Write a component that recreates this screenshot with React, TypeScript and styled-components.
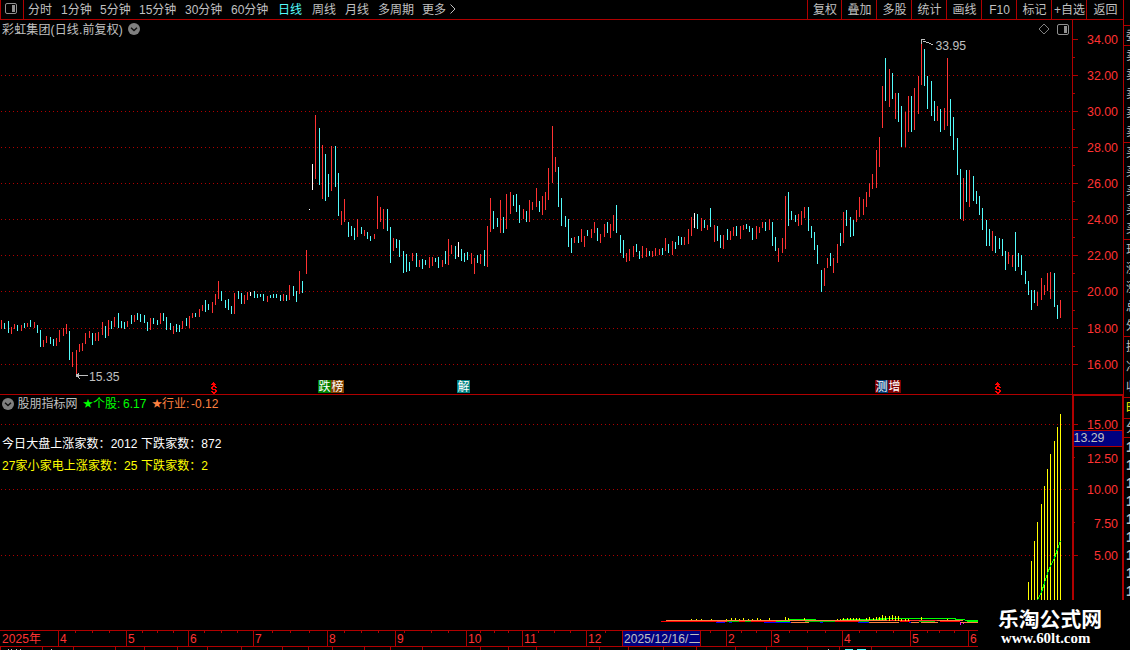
import React from "react";
import styled, { createGlobalStyle } from "styled-components";

const RED = "#b00000";
const LABEL_RED = "#ff3232";
const UP = "#ff3232";
const DOWN = "#54fcfc";
const GRAY = "#c0c0c0";
const FONT = '"Liberation Sans", "Noto Sans CJK SC", sans-serif';

const GlobalStyle = createGlobalStyle`
  * { box-sizing: border-box; }
  body { margin: 0; background: #000; overflow: hidden; }
`;

const Shell = styled.div`
  position: relative;
  display: grid;
  grid-template-columns: 1124px 6px;
  width: 1130px;
  height: 650px;
  overflow: hidden;
  background: #000;
  color: ${GRAY};
  font: 12px/18px ${FONT};
  white-space: pre;
`;

const Main = styled.div`
  display: flex;
  flex-direction: column;
  min-width: 0;
`;

const Toolbar = styled.div`
  display: flex;
  height: 20px;
  border-bottom: 1px solid ${RED};
  border-left: 1px solid ${RED};
  border-right: 1px solid ${RED};
`;

const ToggleCell = styled.div`
  width: 23px;
  padding: 3px 0 0 4px;
  border-right: 1px solid ${RED};
  line-height: 0;
`;

const Periods = styled.div`
  display: flex;
  flex: 1;
  padding-left: 4px;
`;

const Period = styled.div<{ $w: number; $active?: boolean }>`
  width: ${(p) => p.$w}px;
  line-height: 20px;
  color: ${(p) => (p.$active ? DOWN : GRAY)};
`;

const ToolButton = styled.div<{ $w: number }>`
  width: ${(p) => p.$w}px;
  padding-left: 1px;
  border-left: 1px solid ${RED};
  text-align: center;
  line-height: 20px;
`;

const Pane = styled.div<{ $h: number }>`
  display: grid;
  grid-template-columns: 1072px 52px;
  height: ${(p) => p.$h}px;
`;

const PlotColumn = styled.div`
  position: relative;
  display: flex;
  flex-direction: column;
  svg { display: block; }
`;

const PaneHeader = styled.div<{ $h: number; $pad: number }>`
  display: flex;
  align-items: center;
  flex: none;
  height: ${(p) => p.$h}px;
  padding: 0 3px 0 ${(p) => p.$pad}px;
`;

const Title = styled.span`
  margin-right: 5px;
  padding-top: 1px;
  letter-spacing: 0.14px;
`;

const HeaderIcons = styled.div`
  display: flex;
  gap: 7px;
  align-items: center;
  margin-left: auto;
`;

const Divider = styled.div`
  width: 1072px;
  height: 1px;
  background: ${RED};
`;

const Legend = styled.span<{ $color: string; $w: number }>`
  width: ${(p) => p.$w}px;
  color: ${(p) => p.$color};
`;

const Star = styled(Legend)`
  font-size: 10px;
`;

const Stats = styled.div`
  position: absolute;
  left: 2px;
  top: 38px;
  line-height: 22px;
  letter-spacing: 0.07px;
`;

const StatLine = styled.div<{ $color: string }>`
  color: ${(p) => p.$color};
`;

const TimeAxis = styled.div`
  display: flex;
  width: 978px;
  height: 17px;
  overflow: hidden;
  border-top: 1px solid ${RED};
  border-bottom: 1px solid ${RED};
  color: ${LABEL_RED};
`;

const MonthCell = styled.div<{ $w: number; $first?: boolean; $cursor?: boolean }>`
  position: relative;
  flex: none;
  width: ${(p) => p.$w}px;
  padding-left: ${(p) => (p.$first ? 2 : 1)}px;
  line-height: 16px;
  letter-spacing: 0.1px;
  border-left: ${(p) => (p.$first ? "0" : `1px solid ${RED}`)};
  background: ${(p) => (p.$cursor ? "#000080" : "transparent")};
  color: ${(p) => (p.$cursor ? GRAY : LABEL_RED)};
`;

const Tick = styled.i<{ $x: number }>`
  position: absolute;
  top: 0;
  left: ${(p) => p.$x}px;
  width: 1px;
  height: 2px;
  background: ${RED};
`;

const SidePanel = styled.div`
  overflow: hidden;
`;

const SideGroup = styled.div<{ $h: number; $line?: boolean }>`
  display: flex;
  flex-direction: column;
  justify-content: space-around;
  height: ${(p) => p.$h}px;
  padding-left: 2px;
  border-bottom: ${(p) => (p.$line === false ? "0" : `1px solid ${RED}`)};
`;

const SideText = styled.div<{ $color?: string; $large?: boolean }>`
  width: 40px;
  line-height: 18px;
  color: ${(p) => p.$color ?? GRAY};
  font-size: ${(p) => (p.$large ? 14 : 12)}px;
  font-weight: ${(p) => (p.$large ? 700 : 400)};
`;

const Brand = styled.div`
  position: absolute;
  right: 0;
  bottom: 0;
  width: 152px;
  height: 50px;
  padding: 7px 0 0 20px;
  background: #000;
  color: #fff;
`;

const BrandName = styled.div`
  font: 700 20.8px/23px "Noto Sans CJK SC", sans-serif;
`;

const BrandUrl = styled.div`
  padding-left: 3px;
  font: 700 14.9px/17px "Liberation Serif", serif;
`;

type Bar = [number, number, number, string];

// x, top, bottom, direction (R rising, C falling, W unchanged)
const SERIES = `1 320 329 R;4 323 329 C;8 321 333 C;11 327 334 R;14 324 329 R;17 325 331 C;21 325 331 R;24 323 328 C;27 323 327 R;30 320 327 C;34 322 328 R;37 325 333 C;40 330 347 C;43 340 347 R;46 336 343 R;50 337 344 C;53 339 346 C;56 338 346 R;59 330 342 R;63 328 336 R;66 324 334 R;69 331 360 C;72 352 367 R;76 350 374 R;79 344 352 R;82 343 351 R;85 333 344 R;89 331 338 R;92 333 345 C;95 333 341 R;98 332 341 R;102 322 335 R;105 326 338 C;108 320 336 R;111 321 329 C;114 317 327 R;118 313 328 C;121 321 328 C;124 322 329 C;127 321 327 R;131 315 324 C;134 315 322 R;137 313 320 C;140 314 322 C;144 315 323 C;147 322 331 C;150 318 330 R;153 318 324 C;157 320 325 C;160 313 324 R;163 313 321 C;166 317 330 C;170 323 330 C;173 326 334 R;176 324 332 C;179 325 332 C;182 321 329 R;186 318 326 C;189 316 328 R;192 313 318 R;195 313 317 C;199 309 317 R;202 305 311 R;205 300 312 C;208 304 310 C;212 302 313 R;215 294 305 R;218 281 299 R;221 291 301 C;225 300 308 C;228 299 310 C;231 306 314 C;234 293 314 R;238 291 299 C;241 293 304 C;244 295 304 R;247 292 300 R;250 292 296 W;254 291 298 C;257 294 298 C;260 294 297 C;263 294 301 C;267 296 302 R;270 295 298 C;273 294 298 C;276 294 298 C;280 295 301 C;283 294 301 R;286 295 301 C;289 285 300 R;293 286 296 C;296 291 302 C;299 271 294 R;302 281 293 C;306 250 274 R;309 209 210 W;312 164 190 W;315 115 179 R;319 128 185 C;322 145 199 R;325 154 201 C;328 174 197 C;331 146 191 R;335 146 187 C;338 173 216 C;341 211 225 R;344 199 222 R;348 222 237 C;351 226 236 C;354 228 240 C;357 219 237 R;361 227 234 C;364 230 236 R;367 232 239 C;370 236 241 C;374 234 239 R;377 196 229 R;380 207 222 R;383 209 229 R;387 209 231 C;390 227 263 C;393 238 251 R;396 239 248 C;399 240 257 C;403 251 273 C;406 254 272 C;409 262 271 C;412 253 261 R;416 253 267 C;419 260 267 R;422 259 269 C;425 260 265 C;429 257 268 R;432 257 266 R;435 258 262 C;438 257 268 C;442 260 267 R;445 251 264 C;448 239 265 R;451 245 254 R;455 246 259 C;458 242 257 W;461 249 261 C;464 253 262 C;467 252 260 C;471 253 264 R;474 258 274 R;477 255 263 C;480 254 264 R;484 250 266 C;487 226 267 R;490 198 232 R;493 211 229 C;497 218 227 C;500 200 233 R;503 217 233 C;506 194 229 R;510 192 214 R;513 195 206 C;516 194 212 C;519 205 223 C;523 209 219 R;526 211 222 C;529 200 222 R;532 202 210 R;536 188 207 R;539 201 212 C;542 196 215 R;545 192 210 R;548 168 200 R;552 126 183 R;555 157 172 R;558 167 207 C;561 198 226 C;565 216 227 C;568 219 247 C;571 238 253 C;574 237 243 R;578 236 243 C;581 229 242 R;584 236 247 R;587 230 236 C;591 229 238 R;594 222 233 R;597 228 241 C;600 234 243 R;604 224 237 R;607 222 233 C;610 224 238 R;613 215 231 R;616 205 233 C;620 235 253 C;623 240 258 C;626 253 262 R;629 249 261 R;633 246 257 R;636 244 252 C;639 251 259 C;642 246 258 R;646 248 257 R;649 251 256 C;652 251 257 R;655 248 256 R;659 249 255 R;662 248 255 C;665 238 251 R;668 244 253 C;672 241 255 R;675 242 249 C;678 236 245 C;681 237 245 C;684 237 245 R;688 229 244 R;691 217 236 R;694 213 228 W;697 214 229 C;701 218 231 R;704 220 228 C;707 225 230 R;710 208 227 C;714 225 242 R;717 226 241 C;720 235 248 C;723 235 249 R;727 229 240 C;730 231 240 R;733 227 236 R;736 226 236 C;740 226 239 R;743 225 230 R;746 224 229 C;749 226 232 C;752 228 240 C;756 226 239 R;759 227 233 R;762 222 228 R;765 222 231 C;769 219 230 R;772 222 246 C;775 237 251 C;778 248 262 R;782 238 253 R;785 196 249 R;788 192 226 C;791 211 220 C;795 215 222 C;798 214 226 R;801 211 225 R;804 207 218 R;808 207 231 C;811 226 238 C;814 232 250 C;817 245 264 C;821 270 292 C;824 268 286 R;827 258 268 R;830 253 266 C;833 258 273 R;837 244 263 R;840 233 246 C;843 212 243 R;846 210 226 C;850 217 237 C;853 220 236 C;856 210 222 R;859 197 217 R;863 199 215 R;866 192 207 R;869 183 197 R;872 174 189 R;876 150 188 R;879 137 167 R;882 86 128 R;885 58 101 C;889 69 107 R;892 73 99 C;895 93 119 R;898 93 122 C;901 106 147 C;905 112 147 R;908 96 132 R;911 96 132 C;914 88 130 R;918 76 114 R;921 43 85 R;924 49 86 C;927 76 109 C;931 81 116 C;934 101 121 C;937 106 121 R;940 109 132 C;944 108 130 R;947 58 126 R;950 99 136 C;953 117 150 C;957 138 175 C;960 169 219 C;963 178 221 R;966 170 202 C;969 170 207 R;973 176 201 C;976 191 204 C;979 196 215 C;982 208 230 C;986 220 246 C;989 229 246 C;992 231 251 R;995 236 253 C;999 238 249 C;1002 239 256 C;1005 251 270 C;1008 252 264 R;1012 255 267 R;1015 232 271 C;1018 253 267 C;1021 255 275 C;1025 271 284 C;1028 281 295 C;1031 290 310 C;1034 290 303 C;1037 292 306 R;1041 278 300 R;1044 285 295 R;1047 273 291 R;1050 272 299 R;1054 273 307 C;1057 305 319 C;1060 300 318 R`;

const COLORS: Record<string, string> = { R: UP, C: DOWN, W: "#ffffff" };

const bars: Bar[] = SERIES.split(";").map((row) => {
  const [x, top, bottom, dir] = row.split(" ");
  return [Number(x), Number(top), Number(bottom), COLORS[dir]];
});

const priceLevels: [number, string][] = [
  [39, "34.00"], [75, "32.00"], [111, "30.00"], [147, "28.00"], [183, "26.00"],
  [219, "24.00"], [255, "22.00"], [291, "20.00"], [328, "18.00"], [364, "16.00"],
];
const priceMinor = [57, 93, 129, 165, 201, 237, 273, 310, 346];

const breadthLevels: [number, string][] = [
  [424, "15.00"], [458, "12.50"], [489, "10.00"], [523, "7.50"], [555, "5.00"],
];

const breadthBars: [number, number][] = [
  [1028, 582], [1031, 561], [1034, 541], [1037, 522], [1041, 504], [1044, 486],
  [1047, 469], [1050, 454], [1054, 441], [1057, 427], [1060, 414],
];

const spikes: [number, number, number][] = [
  [691, 619, 1], [696, 619, 1], [701, 619, 1], [711, 619, 1], [726, 619, 1], [731, 618, 2],
  [735, 618, 2], [739, 619, 1], [743, 618, 2], [748, 619, 1], [752, 619, 1], [757, 618, 2],
  [760, 619, 1], [769, 618, 2], [785, 617, 3], [788, 618, 2], [804, 618, 2], [837, 619, 1],
  [840, 619, 1], [843, 618, 2], [847, 618, 2], [850, 618, 2], [853, 618, 2], [856, 618, 2],
  [859, 618, 2], [866, 618, 2], [869, 617, 3], [873, 618, 2], [876, 617, 3], [879, 617, 3],
  [882, 615, 5], [885, 616, 4], [889, 616, 5], [892, 615, 5], [895, 616, 5], [898, 616, 5],
  [901, 619, 2], [905, 619, 2], [908, 619, 2], [921, 617, 3], [947, 619, 1],
];

// Thin horizontal runs of the flat indicator lines: x, y, width, colour
const runs: [number, number, number, string][] = [
  [661, 621, 56, "#ff0000"], [666, 620, 227, "#ff8040"], [717, 621, 18, "#ff3232"],
  [716, 622, 9, "#0000ff"], [729, 622, 3, "#0000ff"], [764, 622, 28, "#0000ff"],
  [735, 621, 26, "#ff0000"], [761, 621, 20, "#ff0000"], [727, 621, 12, "#00c000"],
  [745, 621, 6, "#00c000"], [776, 621, 14, "#00ff00"], [788, 619, 28, "#00ff00"],
  [791, 622, 18, "#ff8040"], [805, 621, 30, "#00c000"], [820, 622, 3, "#0000ff"],
  [815, 620, 12, "#ff8040"], [835, 621, 24, "#ff0000"], [842, 619, 45, "#00ff00"],
  [858, 622, 12, "#0000ff"], [859, 621, 10, "#00c000"], [869, 622, 30, "#ff8040"],
  [878, 618, 78, "#00ff00"], [887, 620, 50, "#ff3232"], [900, 621, 10, "#ff0000"],
  [909, 622, 5, "#0000ff"], [911, 622, 8, "#ff8040"], [921, 622, 17, "#ff8040"],
  [919, 621, 16, "#00c000"], [937, 620, 26, "#ff8040"], [940, 621, 20, "#ff0000"],
  [955, 619, 10, "#00ff00"], [965, 620, 13, "#00ff00"], [967, 621, 11, "#00ff00"],
  [960, 622, 18, "#ff8040"], [960, 622, 1, "#ff00ff"], [960, 623, 1, "#ff00ff"],
  [960, 624, 1, "#ff00ff"], [963, 623, 1, "#ff00ff"],
];

const periods: [string, number][] = [
  ["分时", 33], ["1分钟", 39], ["5分钟", 39], ["15分钟", 46], ["30分钟", 46], ["60分钟", 47],
  ["日线", 34], ["周线", 33], ["月线", 33], ["多周期", 44], ["更多", 28],
];

const tools: [string, number][] = [
  ["复权", 34], ["叠加", 35], ["多股", 35], ["统计", 35], ["画线", 35], ["F10", 35],
  ["标记", 35], ["+自选", 35], ["返回", 37],
];

const months: { x: number; label: string; ticks: number[]; cursor?: boolean }[] = [
  { x: 0, label: "2025年", ticks: [] },
  { x: 58, label: "4", ticks: [75, 92, 109] },
  { x: 126, label: "5", ticks: [142, 157, 173] },
  { x: 188, label: "6", ticks: [204, 221, 237] },
  { x: 253, label: "7", ticks: [272, 290, 309] },
  { x: 327, label: "8", ticks: [344, 361, 378] },
  { x: 395, label: "9", ticks: [404, 431, 448] },
  { x: 466, label: "10", ticks: [480, 494, 508] },
  { x: 522, label: "11", ticks: [538, 554, 570] },
  { x: 586, label: "12", ticks: [605] },
  { x: 622, label: "2025/12/16/二", ticks: [], cursor: true },
  { x: 700, label: "", ticks: [710] },
  { x: 726, label: "2", ticks: [741, 756] },
  { x: 771, label: "3", ticks: [789, 807, 825] },
  { x: 842, label: "4", ticks: [859, 876, 893] },
  { x: 910, label: "5", ticks: [927, 939, 954] },
  { x: 968, label: "6", ticks: [] },
];

const footerTicks = [
  0, 42, 73, 115, 144, 177, 207, 241, 282, 308, 332, 364, 390, 422, 480, 508, 536, 599, 628,
  663, 696, 735, 766, 807, 839, 871,
];

const PanelIcon = () => (
  <svg width="12" height="11" viewBox="0 0 12 11">
    <rect x="0.5" y="0.5" width="11" height="10" rx="1.5" fill="none" stroke="#909090" />
    <rect x="7" y="2" width="3" height="7" fill="#909090" />
  </svg>
);

const ChevronBadge = () => (
  <svg width="12" height="12" viewBox="0 0 12 12">
    <circle cx="6" cy="6" r="6" fill="#808080" />
    <path d="M3 4.8 L6 7.6 L9 4.8" fill="none" stroke="#101010" strokeWidth="1.4" />
  </svg>
);

const GridRow = ({ y }: { y: number }) => (
  <line x1="1" x2="1071" y1={y + 0.5} y2={y + 0.5} stroke={RED} strokeDasharray="1 3" />
);

const Dividend = ({ x }: { x: number }) => (
  <path
    fill="#ff0000"
    shapeRendering="crispEdges"
    d={`M${x + 2} 382h1v1h1v1h1v1h-5v-1h1v-1h1zM${x + 1} 386h4v1h-4zM${x} 387h2v2h-2zM${x + 4} 387h2v1h-2zM${x + 1} 389h4v1h-4zM${x + 4} 390h2v2h-2zM${x} 391h2v1h-2zM${x + 1} 392h4v1h-4zM${x + 2} 385h2v1h-2zM${x + 2} 393h2v1h-2z`}
  />
);

const Marker = ({ x, w = 13, fill, text }: { x: number; w?: number; fill: string; text: string }) => (
  <g>
    <rect x={x} y="380" width={w} height="13" fill={fill} shapeRendering="crispEdges" />
    <text x={x + 0.5} y="391" fontSize="12" fill="#fff">{text}</text>
  </g>
);

const PricePlot = () => (
  <svg width="1072" height="356" viewBox="0 38 1072 356" fontFamily={FONT}>
    <g shapeRendering="crispEdges">
      {priceLevels.slice(1).map(([y]) => <GridRow key={y} y={y} />)}
      {bars.map(([x, top, bottom, color]) => (
        <rect key={x} x={x} y={top} width="1" height={bottom - top} fill={color} />
      ))}
      <path d="M921 39h4v1h-3v4h-1zM923 41h3v1h-3zM926 42h3v1h-3zM929 43h2v1h-2zM931 44h2v1h-2z" fill={GRAY} />
      <path d="M76 375h12v1h-12zM76 374h3v3h-3zM78 373h1v1h-1zM78 377h1v1h-1zM79 378h1v1h-1z" fill={GRAY} />
    </g>
    <text x="935.5" y="50" fontSize="12.2" fill={GRAY}>33.95</text>
    <text x="89" y="381" fontSize="12.2" fill={GRAY}>15.35</text>
    <Dividend x={211} />
    <Dividend x={995} />
    <Marker x={318} fill="#008000" text="跌" />
    <Marker x={331} fill="#804000" text="榜" />
    <Marker x={457} fill="#008080" text="解" />
    <rect x="875" y="380" width="4" height="13" fill="#800000" />
    <rect x="878" y="380" width="10" height="13" fill="#003c78" />
    <text x="875.5" y="391" fontSize="12" fill="#fff">测</text>
    <Marker x={888} fill="#800000" text="增" />
  </svg>
);

const PriceAxis = () => (
  <svg width="52" height="375" viewBox="1072 20 52 375" fontFamily={FONT}>
    <g fill={RED} shapeRendering="crispEdges">
      <rect x="1072" y="20" width="1" height="374" />
      <rect x="1123" y="20" width="1" height="374" />
      <rect x="1072" y="394" width="52" height="1" />
      {priceLevels.map(([y]) => <rect key={y} x="1073" y={y} width="5" height="1" />)}
      {priceMinor.map((y) => <rect key={y} x="1073" y={y} width="2" height="1" />)}
    </g>
    {priceLevels.map(([y, label]) => (
      <text key={y} x="1118" y={y + 5} fontSize="12.4" textAnchor="end" fill={LABEL_RED}>{label}</text>
    ))}
  </svg>
);

const BreadthPlot = () => (
  <svg width="1072" height="218" viewBox="0 412 1072 218">
    <g shapeRendering="crispEdges">
      {[424, 489, 555].map((y) => <GridRow key={y} y={y} />)}
      {breadthBars.map(([x, y]) => (
        <rect key={x} x={x} y={y} width="1" height={600 - y} fill="#ffff00" />
      ))}
      <path d="M1037.5 600 L1041.5 592 L1044.5 583 L1047.5 573 L1050.5 566 L1054.5 558 L1057.5 549 L1060.5 541" fill="none" stroke="#00ff00" />
      {runs.map(([x, y, w, color], i) => (
        <rect key={i} x={x} y={y} width={w} height="1" fill={color} />
      ))}
      {spikes.map(([x, y, h]) => <rect key={x} x={x} y={y} width="1" height={h} fill="#ffff00" />)}
    </g>
  </svg>
);

const BreadthAxis = () => (
  <svg width="52" height="235" viewBox="1072 395 52 235" fontFamily={FONT}>
    <g fill={RED} shapeRendering="crispEdges">
      <rect x="1072" y="395" width="2" height="205" />
      <rect x="1122" y="395" width="2" height="205" />
      <rect x="1072" y="395" width="52" height="1" />
      {[424, 489, 555].map((y) => <rect key={y} x="1074" y={y} width="4" height="1" />)}
      {[457, 522].map((y) => <rect key={y} x="1074" y={y} width="1" height="1" />)}
      <rect x="1074" y="430" width="48" height="17" />
      <rect x="1074" y="431" width="48" height="15" fill="#000080" />
    </g>
    {breadthLevels.map(([y, label]) => (
      <text key={y} x="1118" y={y + 5} fontSize="12.4" textAnchor="end" fill={LABEL_RED}>{label}</text>
    ))}
    <text x="1073.5" y="442" fontSize="12.4" fill={GRAY}>13.29</text>
  </svg>
);

const FooterStrip = styled.svg`
  display: block;
`;

const Footer = () => (
  <FooterStrip width="978" height="3" viewBox="0 647 978 3" shapeRendering="crispEdges">
    {footerTicks.map((x) => <rect key={x} x={x} y="647" width="1" height="3" fill={RED} />)}
    {[8, 11, 16, 20, 51, 828].map((x) => <rect key={x} x={x} y="649" width="1" height="1" fill={GRAY} />)}
    <rect x="845" y="649" width="8" height="1" fill={DOWN} />
    <rect x="857" y="649" width="9" height="1" fill={DOWN} />
  </FooterStrip>
);

export default function App() {
  return (
    <Shell>
      <GlobalStyle />
      <Main>
        <Toolbar>
          <ToggleCell><PanelIcon /></ToggleCell>
          <Periods>
            {periods.map(([label, w]) => (
              <Period key={label} $w={w} $active={label === "日线"}>{label}</Period>
            ))}
            <svg width="6" height="19" viewBox="0 0 6 19">
              <path d="M0.5 4.5 L5 9 L0.5 13.5" fill="none" stroke={GRAY} />
            </svg>
          </Periods>
          {tools.map(([label, w]) => <ToolButton key={label} $w={w}>{label}</ToolButton>)}
        </Toolbar>
        <Pane $h={375}>
          <PlotColumn>
            <PaneHeader $h={18} $pad={2}>
              <Title>彩虹集团(日线.前复权)</Title>
              <ChevronBadge />
              <HeaderIcons>
                <svg width="12" height="12" viewBox="0 0 12 12">
                  <path d="M6 1 L11 6 L6 11 L1 6 Z" fill="none" stroke="#808080" />
                </svg>
                <PanelIcon />
              </HeaderIcons>
            </PaneHeader>
            <PricePlot />
            <Divider />
          </PlotColumn>
          <PriceAxis />
        </Pane>
        <Pane $h={235}>
          <PlotColumn>
            <PaneHeader $h={17} $pad={2}>
              <Legend $color={GRAY} $w={15.5}><ChevronBadge /></Legend>
              <Legend $color={GRAY} $w={65.5}>股朋指标网</Legend>
              <Star $color="#00ff00" $w={10}>★</Star>
              <Legend $color="#00ff00" $w={30}>个股:</Legend>
              <Legend $color="#00ff00" $w={29}>6.17</Legend>
              <Star $color="#ff8040" $w={10}>★</Star>
              <Legend $color="#ff8040" $w={29}>行业:</Legend>
              <Legend $color="#ff8040" $w={40}>-0.12</Legend>
            </PaneHeader>
            <BreadthPlot />
            <Stats>
              <StatLine $color="#ffffff">今日大盘上涨家数：2012 下跌家数：872</StatLine>
              <StatLine $color="#ffff00">27家小家电上涨家数：25 下跌家数：2</StatLine>
            </Stats>
          </PlotColumn>
          <BreadthAxis />
        </Pane>
        <TimeAxis>
          {months.map((m, i) => (
            <MonthCell
              key={m.x}
              $w={(months[i + 1]?.x ?? 978) - m.x}
              $first={i === 0}
              $cursor={m.cursor}
            >
              {m.label}
              {m.ticks.map((t) => <Tick key={t} $x={t - m.x - 1} />)}
            </MonthCell>
          ))}
        </TimeAxis>
        <Footer />
      </Main>
      <SidePanel>
        <SideGroup $h={26} />
        <SideGroup $h={20}><SideText>委比</SideText></SideGroup>
        <SideGroup $h={97}>
          {["卖五", "卖四", "卖三", "卖二", "卖一"].map((t) => <SideText key={t}>{t}</SideText>)}
        </SideGroup>
        <SideGroup $h={97}>
          {["买一", "买二", "买三", "买四", "买五"].map((t) => <SideText key={t}>{t}</SideText>)}
        </SideGroup>
        <SideGroup $h={97}>
          {["现价", "涨跌", "涨幅", "总量", "外盘"].map((t) => <SideText key={t}>{t}</SideText>)}
        </SideGroup>
        <SideGroup $h={61}>
          {["换手", "净资", "收益"].map((t) => <SideText key={t}>{t}</SideText>)}
        </SideGroup>
        <SideGroup $h={21}><SideText $color="#ffff00">时间</SideText></SideGroup>
        <SideGroup $h={19}><SideText>分价</SideText></SideGroup>
        <SideGroup $h={162} $line={false}>
          {Array.from({ length: 9 }, (_, i) => <SideText key={i} $large>14:5{i}</SideText>)}
        </SideGroup>
      </SidePanel>
      <Brand>
        <BrandName>乐淘公式网</BrandName>
        <BrandUrl>www.60lt.com</BrandUrl>
      </Brand>
    </Shell>
  );
}
